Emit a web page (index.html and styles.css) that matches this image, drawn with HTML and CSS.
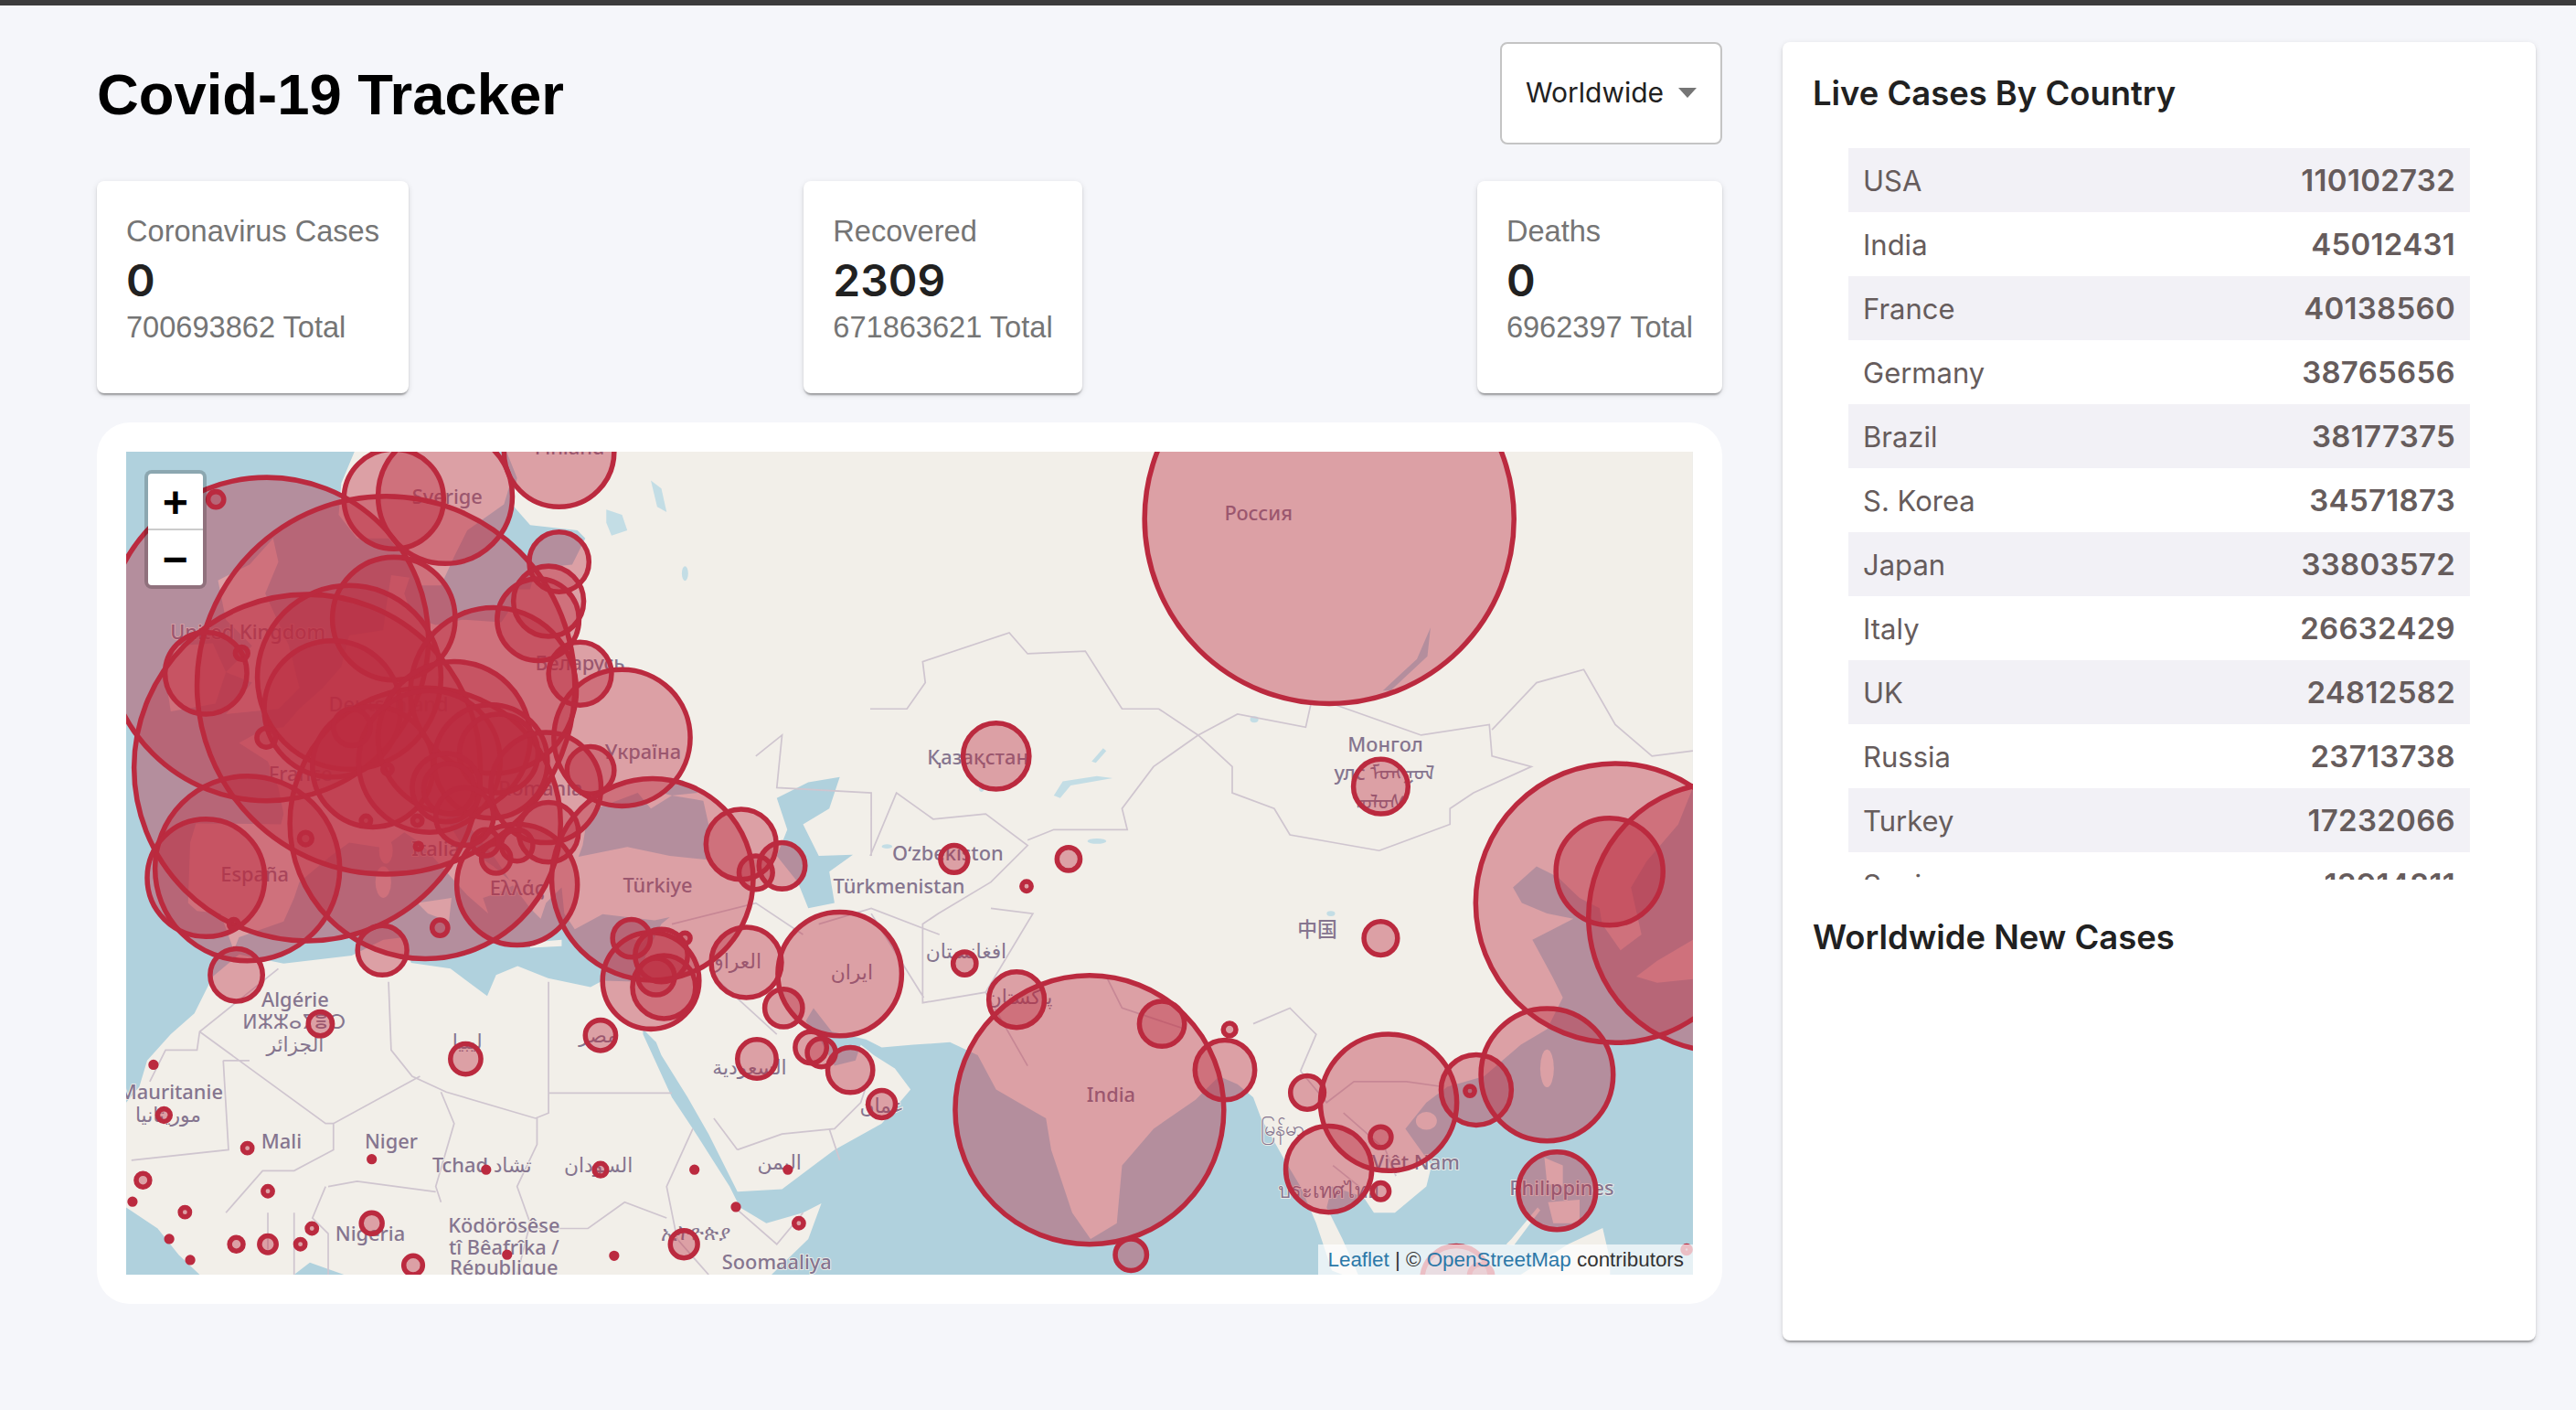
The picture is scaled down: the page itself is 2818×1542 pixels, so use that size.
FILE: index.html
```html
<!DOCTYPE html>
<html lang="en">
<head>
<meta charset="utf-8">
<title>Covid-19 Tracker</title>
<link rel="stylesheet" href="styles.css">
</head>
<body>
<div class="app">
  <main class="left">
    <header class="header">
      <h1 class="title">Covid-19 Tracker</h1>
      <div class="select"><span>Worldwide</span><i class="caret"></i></div>
    </header>
    <section class="stats">
      <article class="card"><p class="label">Coronavirus Cases</p><p class="num">0</p><p class="label total">700693862 Total</p></article>
      <article class="card"><p class="label">Recovered</p><p class="num">2309</p><p class="label total">671863621 Total</p></article>
      <article class="card"><p class="label">Deaths</p><p class="num">0</p><p class="label total">6962397 Total</p></article>
    </section>
    <section class="mapcard">
      <div class="map">
        <svg class="mapsvg" viewBox="0 0 2986 1568" width="1714" height="900">
          <rect class="sea" width="2986" height="1568"/>
          <g class="land">
            <path d="M725 0L745 50L735 100L770 140L860 150L875 165L850 215L780 222L770 262L745 262L735 295L715 325L640 320L590 330L560 320L540 300L530 270L540 240L505 235L495 300L490 340L425 350L410 410L375 450L330 490L300 525L260 530L215 555L270 590L290 640L300 690L295 710L133 708L122 745L120 800L118 860L135 875L180 880L205 950L215 925L300 895L320 850L330 820L390 770L425 745L490 755L530 725L560 745L610 800L650 845L690 880L680 850L710 840L740 825L700 790L640 750L610 700L625 690L650 710L700 770L740 830L770 870L790 890L800 860L830 830L835 880L855 910L908 881L1007 893L1036 887L1020 900L990 960L980 1010L985 1100L1010 1125L1020 1150L1070 1230L1110 1300L1165 1410L1250 1405L1350 1330L1440 1280L1495 1215L1465 1175L1425 1150L1400 1130L1390 1160L1350 1170L1325 1125L1295 1085L1310 1060L1345 1105L1410 1120L1440 1135L1500 1130L1570 1125L1623 1150L1658 1215L1718 1250L1753 1270L1763 1330L1803 1450L1838 1500L1888 1470L1898 1360L1958 1290L2038 1235L2083 1190L2118 1205L2148 1230L2163 1270L2208 1350L2238 1400L2268 1470L2298 1560L2318 1568L2348 1568L2318 1500L2288 1440L2298 1400L2358 1420L2378 1450L2418 1450L2478 1400L2488 1360L2438 1290L2478 1240L2518 1210L2588 1190L2658 1130L2708 1100L2738 1040L2718 1000L2680 930L2758 890L2708 880L2660 860L2643 830L2688 790L2728 810L2770 850L2808 870L2813 900L2848 950L2888 920L2868 830L2898 780L2958 710L2986 640L2986 0Z"/>
            <path d="M435 0L410 60L405 120L440 165L500 165L530 200L560 255L600 255L625 200L650 150L720 100L735 50L700 0Z"/>
            <path d="M215 958L165 1000L130 1070L85 1110L40 1160L25 1210L0 1240L0 1440L60 1480L100 1530L140 1568L320 1568L350 1545L415 1568L1230 1568L1300 1500L1325 1432L1290 1450L1220 1470L1170 1440L1150 1400L1080 1290L1040 1230L985 1110L985 1010L908 1008L885 1020L804 1003L746 980L705 997L688 1037L618 985L543 974L530 925L490 930L430 960L300 975Z"/>
            <path d="M175 245L235 215L280 165L290 210L265 270L310 370L330 450L290 490L190 500L240 440L190 420L240 370L190 320Z"/>
            <path d="M95 370L165 365L190 420L170 480L85 495L75 430Z"/>
            <ellipse cx="495" cy="760" rx="13" ry="25"/>
            <ellipse cx="490" cy="820" rx="15" ry="30"/>
            <path d="M555 860L620 850L615 895L575 880Z"/>
            <path d="M770 935L830 930L830 942L770 945Z"/>
            <path d="M955 925L1000 908L985 935Z"/>
            <ellipse cx="2708" cy="1175" rx="13" ry="36"/>
            <ellipse cx="2478" cy="1275" rx="20" ry="17"/>
            <path d="M2878 1000L2918 970L2986 930L2986 1005L2918 1012Z"/>
            <path d="M2703 1345L2738 1360L2738 1400L2708 1395Z"/>
            <path d="M2710 1430L2770 1425L2770 1470L2720 1470Z"/>
            <path d="M2658 1568L2748 1510L2814 1479L2828 1540L2828 1568Z"/>
            <path d="M2630 1510L2640 1500L2690 1440L2695 1445L2645 1512Z"/>
          </g>
          <g class="water">
            <path d="M875 720L895 680L935 665L975 650L1000 680L1040 655L1100 665L1110 710L1105 777L1036 770L955 753L862 772L870 750Z"/>
            <path d="M1020 650L1060 625L1090 650L1040 655Z"/>
            <path d="M1300 630L1360 620L1340 680L1290 710L1320 770L1385 768L1340 800L1350 860L1300 870L1280 820L1240 770L1260 720L1240 660Z"/>
            <path d="M2486 335L2480 390L2410 455L2395 455L2460 395Z"/>
          </g>
          <g class="lakes">
            <path d="M915 110L945 120L955 150L925 160L915 135Z"/>
            <path d="M1000 55L1020 70L1030 115L1012 105Z"/>
            <ellipse cx="1065" cy="232" rx="6" ry="14"/>
            <path d="M1768 655L1785 628L1850 618L1880 622L1800 636L1780 660Z"/>
            <ellipse cx="2296" cy="880" rx="8" ry="5"/>
            <path d="M1840 590L1862 565L1868 570L1848 593Z"/>
            <ellipse cx="1850" cy="742" rx="18" ry="5"/>
            <ellipse cx="1450" cy="752" rx="10" ry="4"/>
            <ellipse cx="2150" cy="510" rx="8" ry="6"/>
            <ellipse cx="1630" cy="640" rx="5" ry="8"/>
          </g>
          <g class="borders">
            <path d="M290 985L140 1105L135 1140L75 1140L45 1200M140 1105L380 1280L395 1280L560 1190M185 1160L235 1160M185 1160L195 1330L10 1350M500 1010L505 1140L545 1190L610 1220L780 1270L805 1260L805 1010M805 1222L1040 1222M783 1270L783 1320L745 1400L770 1470L745 1568M600 1220L625 1280L590 1400L600 1430M395 1280L395 1330L320 1370L260 1370L190 1450M385 1400L440 1390L590 1410M380 1400L355 1460L385 1490L385 1568M320 1450L320 1568M270 1450L270 1520M1080 1290L1030 1400L1050 1500L1110 1568M1030 1460L950 1430L880 1480L745 1480M1165 1330L1250 1300L1350 1290L1400 1240L1420 1180M1165 1330L1120 1270M1340 1290L1360 1350M1160 1440L1240 1510L1290 1450"/>
            <path d="M1418 490L1488 490L1523 440L1518 400L1683 345L1718 385L1828 380L1898 490L1968 490L2043 540L2118 500L2248 525L2258 480L2298 480L2468 540L2598 520L2603 580L2678 600L2568 650L2523 680L2523 710L2388 760L2218 730L2188 680L2108 650L2108 600L2043 540M2603 530L2688 440L2778 415L2838 520L2908 580L2986 570M2043 540L1958 600L1898 680L1908 720L1768 720L1718 740M1418 770L1468 650L1538 700L1638 690L1718 750L1648 820L1548 880L1518 900L1518 1050L1638 1030L1728 880L1648 870M1638 1030L1718 1170M1868 1000L1898 1060L2018 1100M2148 1090L2218 1060L2268 1110L2238 1180M2238 1180L2288 1240L2340 1200L2440 1200L2510 1210M2320 1260L2400 1330L2420 1380M2300 1360L2350 1400M1200 580L1250 540L1240 640L1420 650L1420 770M1320 900L1420 870L1550 920M1420 880L1520 1040M1040 900L1200 860L1290 920M1130 1010L1240 1110"/>
          </g>
          <g class="labels">
            <text x="232" y="358">United Kingdom</text><text x="612" y="100">Sverige</text><text x="845" y="6">Finland</text><text x="865" y="416">Беларусь</text><text x="985" y="586">Україна</text><text x="500" y="495">Deutschland</text><text x="332" y="628">France</text><text x="245" y="818">España</text><text x="590" y="770">Italia</text><text x="790" y="655">România</text><text x="745" y="845">Ελλάς</text><text x="1013" y="840">Türkiye</text>
            <text x="322" y="1058">Algérie</text><text x="320" y="1100">ⵍⵣⵣⴰⵢⴻⵔ</text><text x="322" y="1143">الجزائر</text><text x="650" y="1137">ليبيا</text><text x="900" y="1125">مصر</text><text x="1188" y="1187">السعودية</text><text x="1160" y="985">العراق</text><text x="1383" y="1005">ايران</text><text x="1440" y="1260">عمان</text><text x="85" y="1233">Mauritanie</text><text x="80" y="1277">موريتانيا</text><text x="296" y="1327">Mali</text><text x="505" y="1328">Niger</text><text x="678" y="1372">Tchad تشاد</text><text x="900" y="1372">السودان</text><text x="1245" y="1368">اليمن</text><text x="465" y="1503">Nigeria</text><text x="720" y="1487">Ködörösêse</text><text x="720" y="1530">tî Bêafrîka /</text><text x="720" y="1568">République</text><text x="1085" y="1502">ኢትዮጵያ</text><text x="1240" y="1558">Soomaaliya</text>
            <text x="2158" y="130">Россия</text><text x="1623" y="596">Қазақстан</text><text x="2400" y="571">Монгол</text><text x="2398" y="626">улс ᠮᠣᠩᠭᠣᠯ</text><text x="2388" y="682">ᠤᠯᠤᠰ</text><text x="1566" y="779">Oʻzbekiston</text><text x="1473" y="841">Türkmenistan</text><text x="1601" y="966">افغانستان</text><text x="1703" y="1052">پاکستان</text><text x="2270" y="923">中国</text><text x="1877" y="1239">India</text><text x="2203" y="1303">မြန်မာ</text><text x="2291" y="1421">ประเทศไทย</text><text x="2458" y="1368">Việt Nam</text><text x="2736" y="1416">Philippines</text>
          </g>
          <g class="circles">
            <circle cx="268" cy="357" r="308"/><circle cx="495" cy="445" r="360"/><circle cx="345" cy="602" r="330"/><circle cx="570" cy="708" r="258"/><circle cx="231" cy="794" r="176"/><circle cx="152" cy="812" r="112"/><circle cx="510" cy="90" r="95"/><circle cx="608" cy="85" r="128"/><circle cx="825" cy="0" r="105"/><circle cx="510" cy="318" r="117"/><circle cx="425" cy="430" r="175"/><circle cx="393" cy="490" r="130"/><circle cx="152" cy="422" r="78"/><circle cx="220" cy="384" r="12"/><circle cx="171" cy="91" r="15"/><circle cx="267" cy="545" r="18"/><circle cx="700" cy="455" r="158"/><circle cx="625" cy="545" r="145"/><circle cx="470" cy="600" r="115"/><circle cx="578" cy="590" r="135"/><circle cx="695" cy="590" r="108"/><circle cx="710" cy="575" r="75"/><circle cx="610" cy="640" r="65"/><circle cx="615" cy="642" r="48"/><circle cx="430" cy="525" r="35"/><circle cx="945" cy="545" r="130"/><circle cx="865" cy="423" r="60"/><circle cx="825" cy="210" r="57"/><circle cx="805" cy="285" r="67"/><circle cx="785" cy="320" r="78"/><circle cx="885" cy="607" r="45"/><circle cx="800" cy="640" r="105"/><circle cx="745" cy="825" r="115"/><circle cx="805" cy="725" r="57"/><circle cx="745" cy="750" r="30"/><circle cx="705" cy="775" r="28"/><circle cx="685" cy="745" r="25"/><circle cx="645" cy="695" r="55"/><circle cx="1003" cy="815" r="192"/><circle cx="1172" cy="748" r="67"/><circle cx="1200" cy="802" r="32"/><circle cx="1250" cy="789" r="44"/><circle cx="1360" cy="995" r="118"/><circle cx="1182" cy="973" r="67"/><circle cx="1253" cy="1060" r="36"/><circle cx="1000" cy="1008" r="92"/><circle cx="1025" cy="1020" r="60"/><circle cx="1010" cy="1000" r="35"/><circle cx="1020" cy="960" r="50"/><circle cx="963" cy="927" r="36"/><circle cx="1065" cy="927" r="10"/><circle cx="488" cy="950" r="47"/><circle cx="210" cy="997" r="50"/><circle cx="598" cy="907" r="15"/><circle cx="370" cy="1090" r="23"/><circle cx="647" cy="1157" r="29"/><circle cx="904" cy="1112" r="29"/><circle cx="1202" cy="1157" r="37"/><circle cx="1305" cy="1135" r="30"/><circle cx="1325" cy="1145" r="27"/><circle cx="1380" cy="1178" r="43"/><circle cx="1440" cy="1243" r="26"/>
            <circle cx="52" cy="1168" r="5"/><circle cx="72" cy="1264" r="12"/><circle cx="231" cy="1327" r="9"/><circle cx="468" cy="1348" r="5"/><circle cx="686" cy="1368" r="5"/><circle cx="904" cy="1368" r="12"/><circle cx="1083" cy="1368" r="5"/><circle cx="1261" cy="1368" r="5"/><circle cx="1162" cy="1439" r="5"/><circle cx="1282" cy="1470" r="9"/><circle cx="32" cy="1388" r="13"/><circle cx="12" cy="1429" r="5"/><circle cx="112" cy="1449" r="9"/><circle cx="270" cy="1409" r="9"/><circle cx="354" cy="1480" r="9"/><circle cx="332" cy="1510" r="9"/><circle cx="210" cy="1510" r="13"/><circle cx="270" cy="1510" r="16"/><circle cx="468" cy="1470" r="20"/><circle cx="82" cy="1500" r="5"/><circle cx="122" cy="1540" r="5"/><circle cx="547" cy="1550" r="18"/><circle cx="726" cy="1530" r="5"/><circle cx="930" cy="1532" r="5"/><circle cx="1063" cy="1510" r="26"/><circle cx="205" cy="900" r="9"/><circle cx="342" cy="737" r="12"/><circle cx="457" cy="703" r="9"/><circle cx="555" cy="703" r="9"/><circle cx="557" cy="752" r="6"/><circle cx="498" cy="605" r="9"/>
            <circle cx="2293" cy="128" r="352"/><circle cx="1658" cy="580" r="63"/><circle cx="2391" cy="638" r="52"/><circle cx="2391" cy="927" r="32"/><circle cx="1796" cy="776" r="22"/><circle cx="1578" cy="776" r="26"/><circle cx="1716" cy="828" r="9"/><circle cx="1598" cy="975" r="22"/><circle cx="1697" cy="1044" r="53"/><circle cx="1836" cy="1254" r="256"/><circle cx="1974" cy="1090" r="43"/><circle cx="2103" cy="1101" r="12"/><circle cx="2094" cy="1178" r="57"/><circle cx="1915" cy="1530" r="30"/><circle cx="2251" cy="1221" r="32"/><circle cx="2406" cy="1240" r="130"/><circle cx="2391" cy="1306" r="20"/><circle cx="2292" cy="1367" r="82"/><circle cx="2391" cy="1409" r="16"/><circle cx="2573" cy="1216" r="67"/><circle cx="2561" cy="1218" r="9"/><circle cx="2708" cy="1187" r="126"/><circle cx="2727" cy="1408" r="74"/><circle cx="2838" cy="860" r="266"/><circle cx="3043" cy="887" r="256"/><circle cx="2827" cy="800" r="102"/>
            <circle cx="2535" cy="1578" r="65"/><circle cx="2582" cy="1570" r="22"/><circle cx="2974" cy="1520" r="7"/>
          </g>
        </svg>
        <div class="zoom"><button class="zbtn zbtn-top" type="button">+</button><button class="zbtn" type="button">−</button></div>
        <div class="attrib"><a class="lnk">Leaflet</a> | © <a class="lnk">OpenStreetMap</a> contributors</div>
      </div>
    </section>
  </main>
  <aside class="panel">
    <h3 class="ptitle">Live Cases By Country</h3>
    <div class="table">
      <div class="row"><span>USA</span><b>110102732</b></div>
      <div class="row"><span>India</span><b>45012431</b></div>
      <div class="row"><span>France</span><b>40138560</b></div>
      <div class="row"><span>Germany</span><b>38765656</b></div>
      <div class="row"><span>Brazil</span><b>38177375</b></div>
      <div class="row"><span>S. Korea</span><b>34571873</b></div>
      <div class="row"><span>Japan</span><b>33803572</b></div>
      <div class="row"><span>Italy</span><b>26632429</b></div>
      <div class="row"><span>UK</span><b>24812582</b></div>
      <div class="row"><span>Russia</span><b>23713738</b></div>
      <div class="row"><span>Turkey</span><b>17232066</b></div>
      <div class="row"><span>Spain</span><b>13914811</b></div>
    </div>
    <h3 class="ptitle ptitle-2">Worldwide New Cases</h3>
  </aside>
</div>
</body>
</html>
```
FILE: styles.css
```css
* { box-sizing: border-box; }
html, body { margin: 0; height: 100%; }
body { background: #f5f6fa; border-top: 6px solid #3c3c3c; font-family: "Liberation Sans", Arial, sans-serif; overflow: hidden; }
.app { display: flex; justify-content: space-between; align-items: flex-start; padding: 40px 44px 0 106px; }
.left { width: 1778px; }
.header { display: flex; justify-content: space-between; align-items: center; height: 112px; }
.title { margin: 4px 0 0; font-size: 63.4px; font-weight: 700; color: #000; line-height: 1; }
.select { display: flex; align-items: center; justify-content: space-between; width: 243px; height: 112px; padding: 0 26px 2px; background: #fff; border: 2px solid #c4c4c4; border-radius: 8px; font-family: Inter, sans-serif; font-size: 30px; color: #212121; }
.caret { width: 0; height: 0; border-left: 10px solid transparent; border-right: 10px solid transparent; border-top: 11px solid #757575; }
.stats { display: flex; justify-content: space-between; margin-top: 40px; }
.card { background: #fff; border-radius: 8px; padding: 32px 32px 50px; box-shadow: 0 4px 2px -2px rgba(0,0,0,.2), 0 2px 2px rgba(0,0,0,.14), 0 2px 6px rgba(0,0,0,.12); }
.label { margin: 0; font-size: 32.6px; line-height: 46px; color: #757575; white-space: nowrap; }
.total { line-height: 44px; }
.num { margin: 0; font-family: Inter, sans-serif; font-size: 48px; font-weight: 600; line-height: 60px; color: #212121; padding-top: 1px; height: 60px; }
.mapcard { margin-top: 32px; padding: 32px; background: #fff; border-radius: 36px; }
.map { position: relative; width: 1714px; height: 900px; overflow: hidden; background: #b0d1dd; }
.mapsvg { display: block; }
.sea { fill: #b0d1dd; }
.land { fill: #f2efe9; }
.water { fill: #b0d1dd; }
.lakes { fill: #c3dde5; }
.borders { fill: none; stroke: #cfc5cf; stroke-width: 3; }
.labels { font-family: "Noto Sans", "DejaVu Sans", "Noto Sans CJK SC", sans-serif; font-size: 38px; font-weight: 500; fill: #85758f; text-anchor: middle; stroke: #f2efe9; stroke-width: 3px; paint-order: stroke; }
.circles { fill: #bb2a3f; fill-opacity: .4; stroke: #bb2a3f; stroke-width: 9.6; }
.zoom { position: absolute; left: 20px; top: 20px; width: 68px; padding: 4px; border-radius: 8px; background: rgba(0,0,0,.2); display: flex; flex-direction: column; }
.zbtn { width: 60px; height: 60px; padding: 10px 0 0; border: 0; background: #fff; color: #000; font-family: "Liberation Mono", monospace; font-weight: 700; font-size: 48px; line-height: 50px; border-radius: 0 0 4px 4px; }
.zbtn-top { height: 62px; border-bottom: 2px solid #ccc; border-radius: 4px 4px 0 0; }
.attrib { position: absolute; right: 0; bottom: 0; height: 33px; padding: 0 10px; background: rgba(255,255,255,.7); font-size: 22.4px; line-height: 33px; color: #333; white-space: nowrap; }
.lnk { color: #2c78a8; }
.panel { width: 824px; height: 1420px; padding: 32px 33px 32px 33px; background: #fff; border-radius: 8px; box-shadow: 0 4px 2px -2px rgba(0,0,0,.2), 0 2px 2px rgba(0,0,0,.14), 0 2px 6px rgba(0,0,0,.12); font-family: Inter, sans-serif; }
.ptitle { margin: 0; font-size: 36.4px; font-weight: 600; line-height: 48px; color: #212121; }
.ptitle-2 { margin-top: 39px; }
.table { height: 800px; margin: 36px 39px 0; overflow: hidden; color: #665c5c; font-size: 31px; }
.row { display: flex; justify-content: space-between; align-items: center; height: 70px; padding: 0 16px; }
.row:nth-child(odd) { background: #f2f1f6; }
.row b { font-size: 33px; font-weight: 600; letter-spacing: .3px; }
```
